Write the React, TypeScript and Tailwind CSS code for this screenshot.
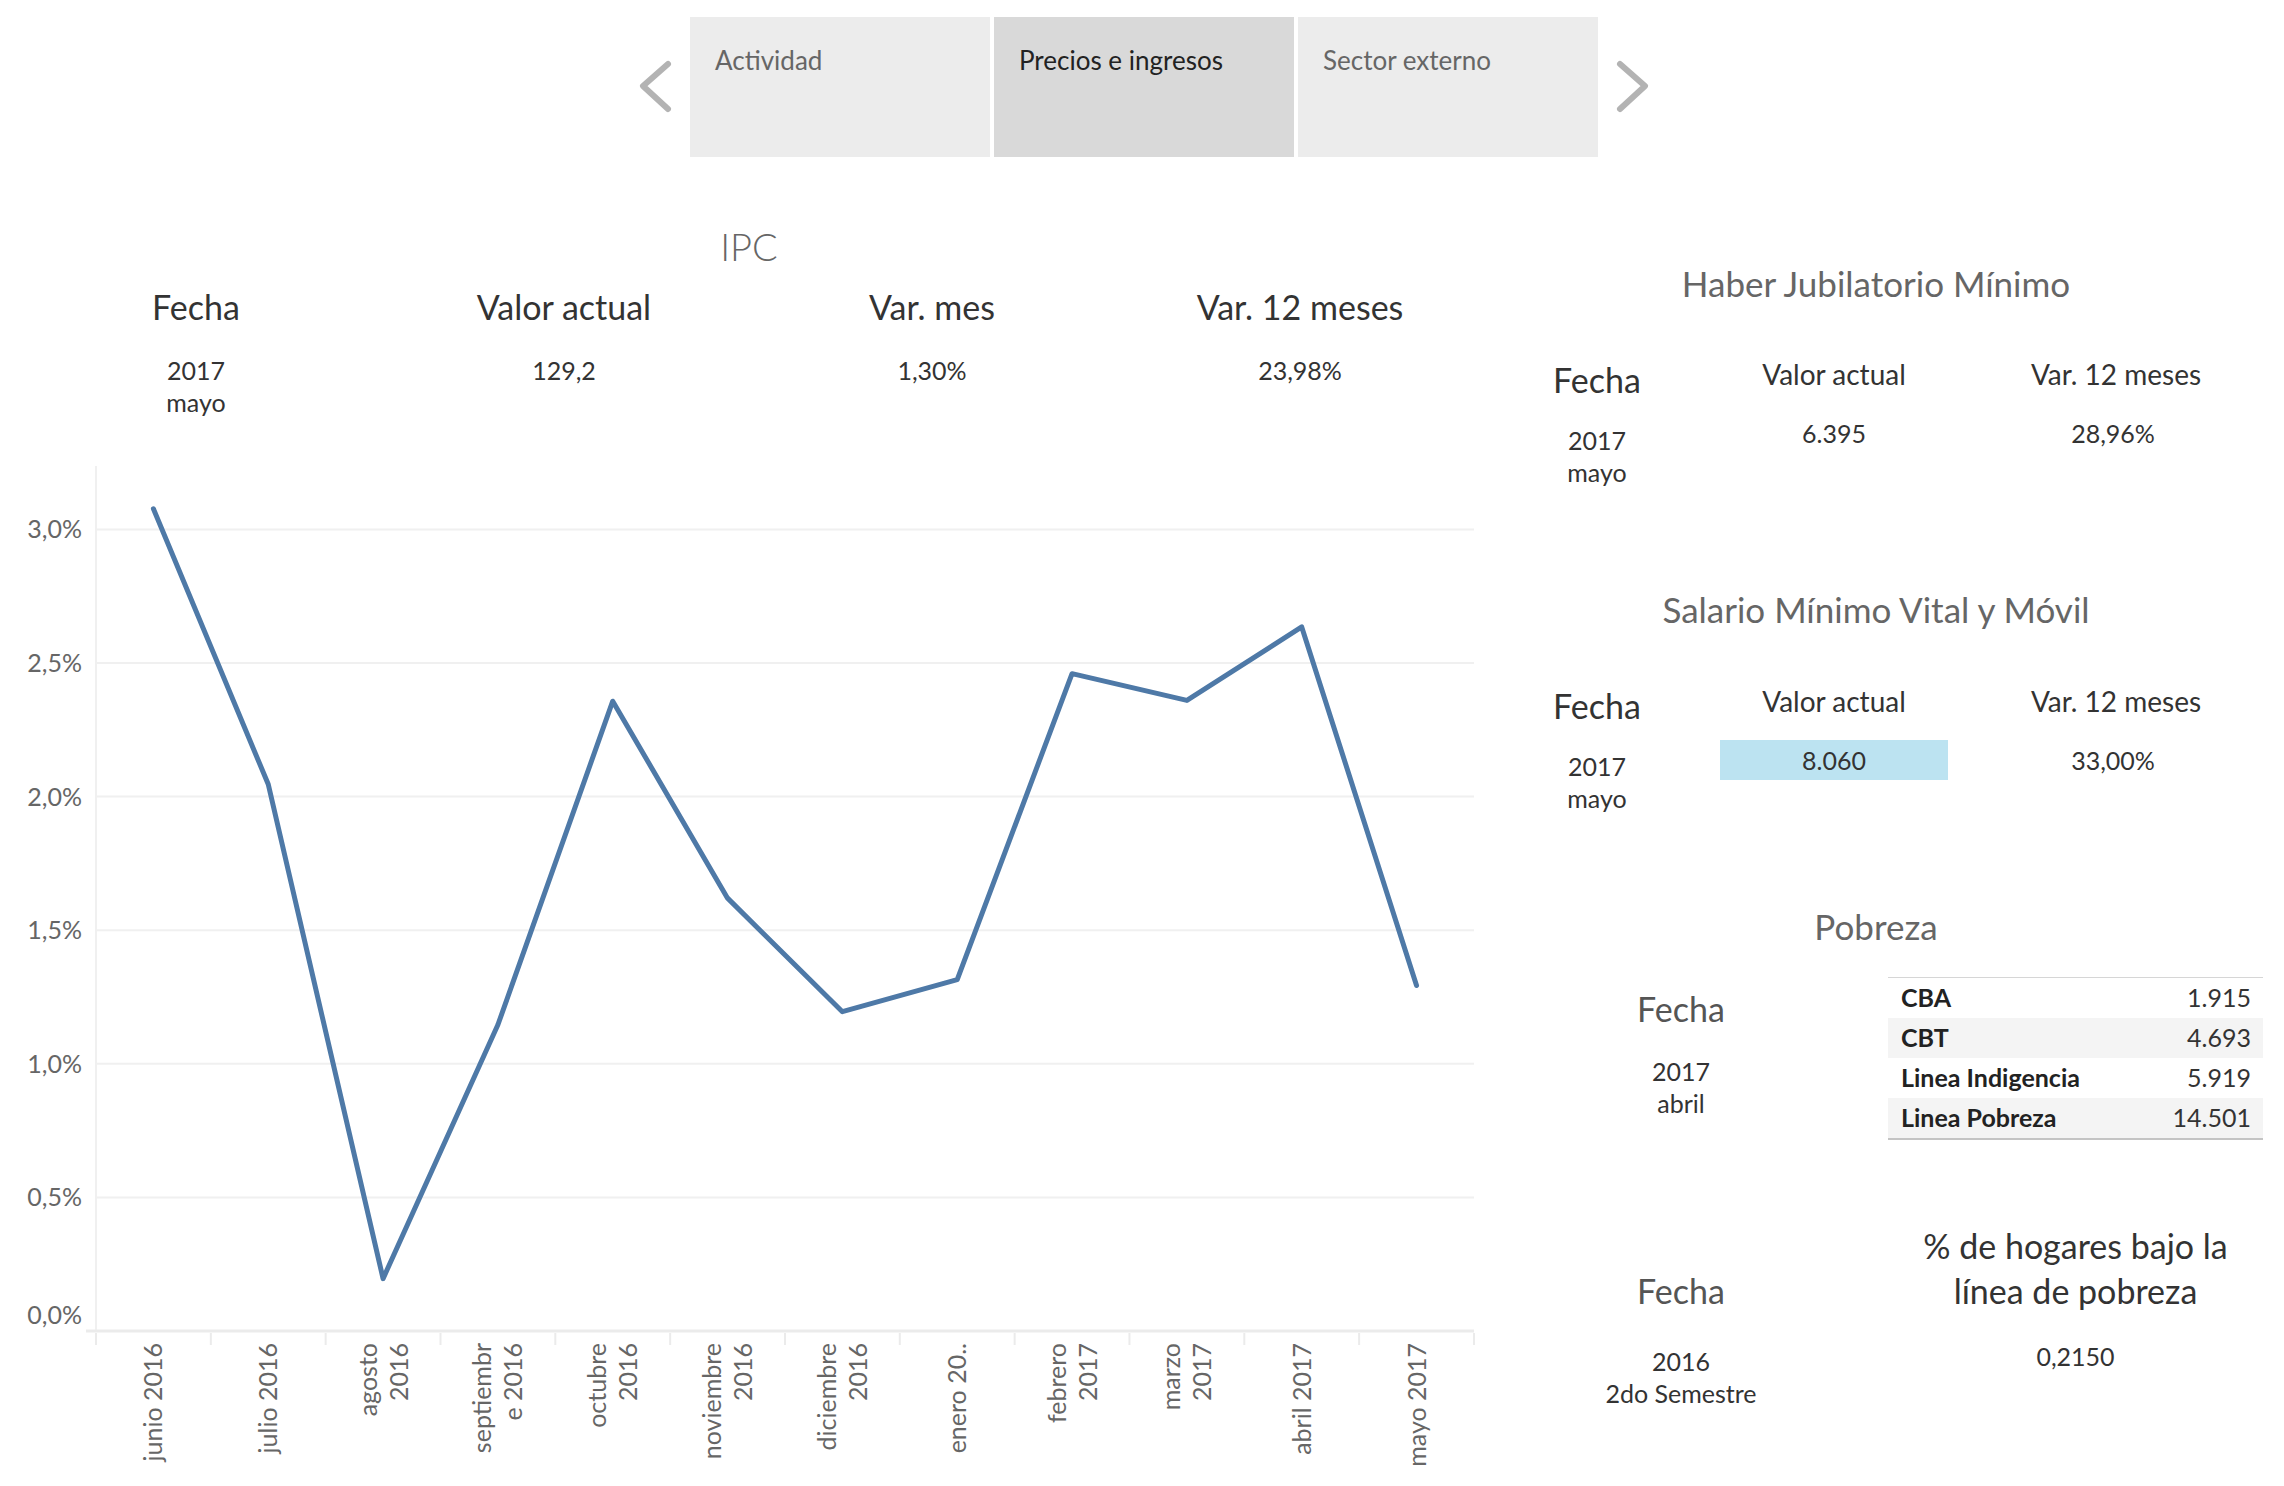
import React from 'react';

const tabs = [
  { label: 'Actividad', active: false },
  { label: 'Precios e ingresos', active: true },
  { label: 'Sector externo', active: false },
];

const ipc = [3.077, 2.046, 0.196, 1.146, 2.357, 1.62, 1.195, 1.315, 2.46, 2.36, 2.635, 1.293];

const months: string[][] = [
  ['junio 2016'],
  ['julio 2016'],
  ['agosto', '2016'],
  ['septiembr', 'e 2016'],
  ['octubre', '2016'],
  ['noviembre', '2016'],
  ['diciembre', '2016'],
  ['enero 20..'],
  ['febrero', '2017'],
  ['marzo', '2017'],
  ['abril 2017'],
  ['mayo 2017'],
];

const pobreza = [
  { name: 'CBA', value: '1.915' },
  { name: 'CBT', value: '4.693' },
  { name: 'Linea Indigencia', value: '5.919' },
  { name: 'Linea Pobreza', value: '14.501' },
];

const Chevron = ({ dir }: { dir: 'left' | 'right' }) => (
  <svg width="40" height="60" viewBox="0 0 40 60" className="mt-[40px]">
    <path
      d={dir === 'left' ? 'M32 7 L7 29 L32 52' : 'M8 7 L33 29 L8 52'}
      fill="none"
      stroke="#b3b3b3"
      strokeWidth="6"
      strokeLinecap="round"
      strokeLinejoin="round"
    />
  </svg>
);

const IpcChart = () => {
  const x0 = 96;
  const step = 114.83;
  const base = 891;
  const unit = 267.2;
  const pts = ipc.map((v, i) => `${x0 + step / 2 + i * step},${base - v * unit}`).join(' ');
  const yLabels = ['0,0%', '0,5%', '1,0%', '1,5%', '2,0%', '2,5%', '3,0%'];

  return (
    <svg width="1480" height="1046" className="block overflow-visible">
      <line x1={96} y1={26} x2={96} y2={891} stroke="#f0f0f0" strokeWidth={2} />
      {[1, 2, 3, 4, 5, 6].map((k) => (
        <line key={k} x1={96} x2={1474} y1={base - k * 133.6} y2={base - k * 133.6} stroke="#f0f0f0" strokeWidth={2} />
      ))}
      <line x1={86} x2={1474} y1={base} y2={base} stroke="#ebebeb" strokeWidth={3} />
      {Array.from({ length: 13 }).map((_, i) => (
        <line key={i} x1={x0 + i * step} x2={x0 + i * step} y1={base + 2} y2={base + 14} stroke="#ebebeb" strokeWidth={2} />
      ))}
      {yLabels.map((t, k) => (
        <text
          key={t}
          x={82}
          y={k === 0 ? 884 : base - k * 133.6 + 9}
          textAnchor="end"
          fontFamily="Lato, sans-serif"
          fontSize={25}
          fill="#666666"
        >
          {t}
        </text>
      ))}
      {months.map((lines, i) => {
        const cx = x0 + step / 2 + i * step;
        return lines.map((ln, j) => {
          const c = lines.length === 1 ? cx : cx + (j === 0 ? -15.5 : 15.5);
          const ax = c + 9;
          return (
            <text
              key={`${i}-${j}`}
              transform={`translate(${ax} 903) rotate(-90)`}
              textAnchor="end"
              fontFamily="Lato, sans-serif"
              fontSize={25}
              fill="#666666"
            >
              {ln}
            </text>
          );
        });
      })}
      <polyline points={pts} fill="none" stroke="#4e79a7" strokeWidth={5} strokeLinejoin="round" strokeLinecap="round" />
    </svg>
  );
};

export default function App() {
  return (
    <div className="w-[2284px] h-[1486px] overflow-hidden bg-white font-['Lato',sans-serif] text-[#333]">
      {/* tabs */}
      <div className="flex justify-center items-start pt-[17px] pl-[4px] h-[157px]">
        <Chevron dir="left" />
        <div className="flex gap-[4px] mx-[14px]">
          {tabs.map((t) => (
            <div
              key={t.label}
              className={`w-[300px] h-[140px] pl-[25px] pt-[27px] text-[26px] leading-[32px] ${
                t.active ? 'bg-[#d9d9d9] text-[#222]' : 'bg-[#ececec] text-[#666]'
              }`}
            >
              {t.label}
            </div>
          ))}
        </div>
        <Chevron dir="right" />
      </div>

      <div className="flex">
        {/* IPC */}
        <div className="w-[1468px] shrink-0">
          <div className="mt-[66px] pl-[30px] text-center text-[38px] leading-[46px] font-light text-[#666]">IPC</div>
          <div className="ml-[12px] w-[1472px] grid grid-cols-4 mt-[18px] text-center">
            {['Fecha', 'Valor actual', 'Var. mes', 'Var. 12 meses'].map((h) => (
              <div key={h} className="text-[34px] leading-[40px] text-[#333]">{h}</div>
            ))}
          </div>
          <div className="ml-[12px] w-[1472px] grid grid-cols-4 mt-[27px] text-center text-[25px] leading-[32px] text-[#333]">
            <div>
              <div>2017</div>
              <div>mayo</div>
            </div>
            <div>129,2</div>
            <div>1,30%</div>
            <div>23,98%</div>
          </div>
          <div className="mt-[22px]">
            <IpcChart />
          </div>
        </div>

        {/* right panel */}
        <div className="w-[816px] shrink-0">
          <div className="mt-[105px] text-center text-[35px] leading-[42px] text-[#666]">Haber Jubilatorio Mínimo</div>
          <div className="grid grid-cols-[252px_228px_336px] mt-[53px] text-center items-start">
            <div className="pt-[3px] pl-[6px] text-[34px] leading-[40px] text-[#333]">Fecha</div>
            <div className="text-[28px] leading-[34px]">Valor actual</div>
            <div className="text-[28px] leading-[34px]">Var. 12 meses</div>
          </div>
          <div className="grid grid-cols-[252px_228px_336px] mt-[17px] text-center items-start text-[25px] leading-[32px]">
            <div className="pt-[7px] pl-[6px]">
              <div>2017</div>
              <div>mayo</div>
            </div>
            <div>6.395</div>
            <div className="pr-[6px]">28,96%</div>
          </div>

          <div className="mt-[100px] text-center text-[35px] leading-[42px] text-[#666]">Salario Mínimo Vital y Móvil</div>
          <div className="grid grid-cols-[252px_228px_336px] mt-[54px] text-center items-start">
            <div className="pt-[2px] pl-[6px] text-[34px] leading-[40px] text-[#333]">Fecha</div>
            <div className="text-[28px] leading-[34px]">Valor actual</div>
            <div className="text-[28px] leading-[34px]">Var. 12 meses</div>
          </div>
          <div className="grid grid-cols-[252px_228px_336px] mt-[14px] text-center items-start text-[25px] leading-[32px]">
            <div className="pt-[10px] pl-[6px]">
              <div>2017</div>
              <div>mayo</div>
            </div>
            <div className="h-[40px] bg-[#bce3f1] flex items-center justify-center">8.060</div>
            <div className="h-[40px] pr-[6px] flex items-center justify-center">33,00%</div>
          </div>

          <div className="mt-[91px] text-center text-[35px] leading-[42px] text-[#666]">Pobreza</div>
          <div className="grid grid-cols-[420px_375px] mt-[30px] items-start">
            <div className="pt-[12px] pl-[6px] text-center">
              <div className="text-[34px] leading-[40px] text-[#555]">Fecha</div>
              <div className="mt-[26px] text-[25px] leading-[32px]">
                <div>2017</div>
                <div>abril</div>
              </div>
            </div>
            <div className="border-t border-[#d6d6d6] border-b-2 border-b-[#c4c4c4]">
              {pobreza.map((r, i) => (
                <div
                  key={r.name}
                  className={`h-[40px] flex items-center justify-between pl-[13px] pr-[12px] ${i % 2 === 1 ? 'bg-[#f4f4f4]' : ''}`}
                >
                  <span className="font-bold text-[25px] text-[#222]">{r.name}</span>
                  <span className="text-[25px] text-[#333]">{r.value}</span>
                </div>
              ))}
            </div>
          </div>

          <div className="grid grid-cols-[420px_375px] mt-[83px] items-end text-center">
            <div className="pl-[6px] text-[34px] leading-[45px] text-[#555]">Fecha</div>
            <div className="text-[34px] leading-[45px] text-[#333]">
              % de hogares bajo la
              <br />
              línea de pobreza
            </div>
          </div>
          <div className="grid grid-cols-[420px_375px] mt-[27px] items-start text-center text-[25px] leading-[32px]">
            <div className="pt-[5px] pl-[6px]">
              <div>2016</div>
              <div>2do Semestre</div>
            </div>
            <div>0,2150</div>
          </div>
        </div>
      </div>
    </div>
  );
}
